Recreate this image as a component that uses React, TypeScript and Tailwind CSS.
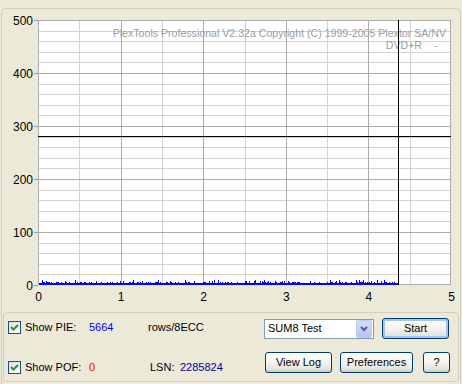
import React from "react";

const px = (x: number) => 38 + x * 82.6;
const py = (v: number) => 285 - v * 0.53;

// deterministic noise for the PIE trace
const spikes: { x: number; h: number }[] = (() => {
  let seed = 12345;
  const rand = () => {
    seed = (seed * 1103515245 + 12345) % 2147483648;
    return seed / 2147483648;
  };
  const out: { x: number; h: number }[] = [];
  for (let x = 39; x < 398; x++) {
    const r = rand();
    const h = r < 0.66 ? 0 : r < 0.88 ? 1 : r < 0.96 ? 2 : 3;
    if (h > 0) out.push({ x, h });
  }
  return out;
})();

const Chart: React.FC = () => {
  const minorV = [0.5, 1.5, 2.5, 3.5, 4.5].map((k) => Math.round(px(k)));
  const majorV = [1, 2, 3, 4].map((k) => Math.round(px(k)));
  const minorH: number[] = [];
  for (let v = 20; v < 500; v += 20) if (v % 100 !== 0) minorH.push(Math.round(py(v)));
  const majorH = [100, 200, 300, 400].map((v) => Math.round(py(v)));

  return (
    <svg width={458} height={295} viewBox="2 9 458 295" className="block">
      <rect x={38} y={20} width={413} height={265} fill="#ffffff" />
      {minorH.map((y) => (
        <line key={"mh" + y} x1={38} x2={451} y1={y + 0.5} y2={y + 0.5} stroke="#D4D4D4" />
      ))}
      {minorV.map((x) => (
        <line key={"mv" + x} x1={x + 0.5} x2={x + 0.5} y1={20} y2={285} stroke="#D4D4D4" />
      ))}
      {majorH.map((y) => (
        <line key={"MH" + y} x1={38} x2={451} y1={y + 0.5} y2={y + 0.5} stroke="#ADADAD" />
      ))}
      {majorV.map((x) => (
        <line key={"MV" + x} x1={x + 0.5} x2={x + 0.5} y1={20} y2={285} stroke="#ADADAD" />
      ))}
      <rect x={38.5} y={20.5} width={412} height={264} fill="none" stroke="#ADADAD" />
      {[0, 100, 200, 300, 400, 500].map((v) => (
        <line key={"t" + v} x1={34} x2={38} y1={Math.round(py(v)) + 0.5} y2={Math.round(py(v)) + 0.5} stroke="#9A9A9A" />
      ))}

      <g fontFamily="'Liberation Sans', Arial, sans-serif" fontSize={10.6} fill="#9C9C9C">
        <text x={446} y={37} textAnchor="end">
          PlexTools Professional V2.32a Copyright (C) 1999-2005 Plextor SA/NV
        </text>
        <text x={422} y={49} textAnchor="end">DVD+R</text>
        <text x={438} y={49} textAnchor="end">-</text>
      </g>

      <rect x={39} y={283} width={359} height={2} fill="#0000FF" />
      {spikes.map((s) => (
        <rect key={s.x} x={s.x} y={283 - s.h} width={1} height={s.h} fill="#0000FF" />
      ))}

      <line x1={398.5} x2={398.5} y1={20} y2={285} stroke="#000000" />
      <line x1={38} x2={451} y1={136.5} y2={136.5} stroke="#000000" />

      <g fontFamily="'Liberation Sans', Arial, sans-serif" fontSize={12} fill="#000000">
        {[0, 100, 200, 300, 400, 500].map((v) => (
          <text key={"l" + v} x={33} y={Math.round(py(v)) + 5} textAnchor="end">
            {v}
          </text>
        ))}
        {[0, 1, 2, 3, 4, 5].map((k) => (
          <text key={"x" + k} x={px(k) + 0.5} y={301} textAnchor="middle">
            {k}
          </text>
        ))}
      </g>
    </svg>
  );
};

const CheckBox: React.FC = () => (
  <span className="w-[13px] h-[13px] border border-[#1C5180] bg-gradient-to-br from-[#DCDCD7] to-white flex items-center justify-center">
    <svg width={9} height={9} viewBox="0 0 9 9">
      <path d="M1 4 L3.5 6.5 L8 2" fill="none" stroke="#21A121" strokeWidth={2} />
    </svg>
  </span>
);

const XpButton: React.FC<{ label: string; w: string; focused?: boolean }> = ({ label, w, focused }) => (
  <button
    className={
      "h-[21px] rounded-[3px] border border-[#003C74] bg-gradient-to-b from-white via-[#F3F3EF] to-[#DEDDD5] text-[11px] text-black flex items-center justify-center " +
      w +
      (focused ? " shadow-[inset_0_0_0_2px_#A9C3EE]" : " shadow-[inset_0_-2px_0_#D6D0C5]")
    }
  >
    {label}
  </button>
);

export default function App() {
  return (
    <div className="w-[462px] h-[384px] overflow-hidden bg-[#ECE9D8] pt-[8px] pl-[1px] font-['Liberation_Sans',Arial,sans-serif] text-[11px] text-black">
      <div className="w-[460px] h-[400px] border border-[#D0D0BF] rounded-[4px]">
        <Chart />
        <div className="ml-[1px] mt-[8px] w-[456px] h-[70px] border border-[#D0D0BF] rounded-[4px] flex">
          <div className="w-[260px] pl-[4px] pt-[8px] flex flex-col">
            <div className="flex items-center h-[13px]">
              <div className="w-[81px] flex items-center">
                <CheckBox />
                <span className="ml-[4px]">Show PIE:</span>
              </div>
              <span className="w-[59px] text-[#0000FF]">5664</span>
              <span>rows/8ECC</span>
            </div>
            <div className="flex items-center h-[13px] mt-[27px]">
              <div className="w-[81px] flex items-center">
                <CheckBox />
                <span className="ml-[4px]">Show POF:</span>
              </div>
              <span className="w-[61px] text-[#FF0000]">0</span>
              <span className="w-[30px]">LSN:</span>
              <span className="text-[#0000A0]">2285824</span>
            </div>
          </div>
          <div className="pt-[5px] flex flex-col">
            <div className="flex items-center h-[21px]">
              <div className="w-[110px] h-[20px] border border-[#7F9DB9] bg-white flex items-center">
                <span className="flex-1 pl-[3px]">SUM8 Test</span>
                <span className="w-[16px] h-[18px] mr-px rounded-[2px] border border-[#BCCDF5] bg-gradient-to-b from-[#D2DDFA] to-[#B1C5F2] flex items-center justify-center">
                  <svg width={8} height={6} viewBox="0 0 8 6">
                    <path d="M1 1 L4 4 L7 1" fill="none" stroke="#4D6185" strokeWidth={2} />
                  </svg>
                </span>
              </div>
              <div className="ml-[8px]">
                <XpButton label="Start" w="w-[67px]" focused />
              </div>
            </div>
            <div className="flex items-center mt-[13px] ml-[1px] gap-[8px]">
              <XpButton label="View Log" w="w-[67px]" />
              <XpButton label="Preferences" w="w-[73px]" />
              <div className="ml-[2px]">
                <XpButton label="?" w="w-[27px]" />
              </div>
            </div>
          </div>
        </div>
      </div>
    </div>
  );
}
